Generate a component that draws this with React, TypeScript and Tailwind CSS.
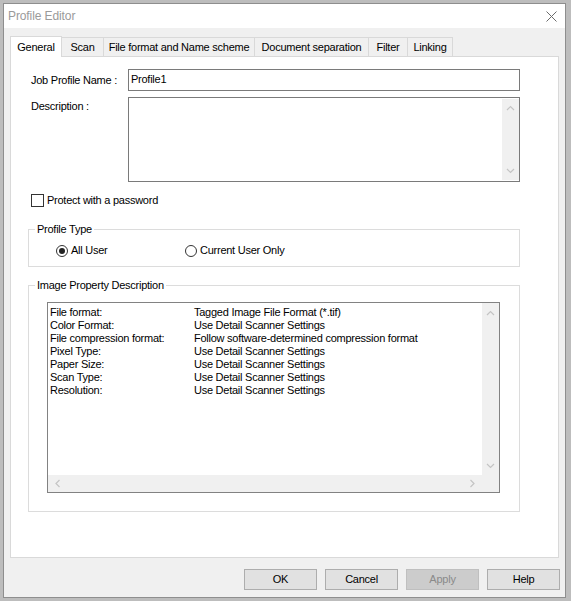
import React from "react";

const TABS: { label: string; w: string }[] = [
  { label: "General", w: "w-[52px]" },
  { label: "Scan", w: "w-[42px]" },
  { label: "File format and Name scheme", w: "w-[151px]" },
  { label: "Document separation", w: "w-[114px]" },
  { label: "Filter", w: "w-[39px]" },
  { label: "Linking", w: "w-[45px]" },
];

const PROPS: [string, string][] = [
  ["File format:", "Tagged Image File Format (*.tif)"],
  ["Color Format:", "Use Detail Scanner Settings"],
  ["File compression format:", "Follow software-determined compression format"],
  ["Pixel Type:", "Use Detail Scanner Settings"],
  ["Paper Size:", "Use Detail Scanner Settings"],
  ["Scan Type:", "Use Detail Scanner Settings"],
  ["Resolution:", "Use Detail Scanner Settings"],
];

type Dir = "up" | "down" | "left" | "right";

const CHEVRONS: Record<Dir, string> = {
  up: "M1 5 L4.5 1.5 L8 5",
  down: "M1 2 L4.5 5.5 L8 2",
  left: "M5.5 1 L2 4.5 L5.5 8",
  right: "M2.5 1 L6 4.5 L2.5 8",
};

function Chevron({ dir }: { dir: Dir }) {
  const flat = dir === "up" || dir === "down";
  return (
    <svg width={flat ? 9 : 8} height={flat ? 7 : 9} viewBox={flat ? "0 0 9 7" : "0 0 8 9"}>
      <path d={CHEVRONS[dir]} fill="none" stroke="#c4c4c4" strokeWidth={1.2} />
    </svg>
  );
}

function Button({ label, disabled }: { label: string; disabled?: boolean }) {
  return (
    <button
      className={`w-[73px] h-[21px] border text-[11px] flex items-center justify-center ${
        disabled ? "bg-[#cccccc] border-[#bfbfbf] text-[#8a8a8a]" : "bg-[#e1e1e1] border-[#adadad] text-black"
      }`}
    >
      {label}
    </button>
  );
}

export default function App() {
  return (
    <div className="w-[571px] h-[601px] bg-[#bdbdbd] pl-[3px] pt-[3px] font-['Liberation_Sans',Arial,sans-serif] text-[11px] leading-[13px] tracking-[-0.25px] text-black">
      <div className="w-[563px] h-[595px] border border-[#8e8e8e] bg-[#f0f0f0] flex flex-col">
        {/* title bar */}
        <div className="h-[24px] bg-white flex items-center justify-between pl-[4px] pr-[8px]">
          <span className="text-[12px] text-[#9a9a9a] tracking-[-0.1px]">Profile Editor</span>
          <svg width="11" height="11" viewBox="0 0 11 11">
            <path d="M0.5 0.5 L10.5 10.5 M10.5 0.5 L0.5 10.5" stroke="#6b6b6b" strokeWidth={1} />
          </svg>
        </div>

        <div className="px-[6px] pt-[8px] flex flex-col">
          {/* tab strip */}
          <div className="flex items-end h-[21px] -mb-[1px] relative z-10">
            {TABS.map((t, i) =>
              i === 0 ? (
                <div
                  key={t.label}
                  className={`${t.w} h-[21px] bg-white border border-b-0 border-[#d9d9d9] flex items-center justify-center`}
                >
                  {t.label}
                </div>
              ) : (
                <div
                  key={t.label}
                  className={`${t.w} h-[19px] mb-[1px] bg-[#f0f0f0] border-t border-r border-[#d9d9d9] flex items-center justify-center`}
                >
                  {t.label}
                </div>
              )
            )}
          </div>

          {/* tab panel */}
          <div className="w-[549px] h-[502px] bg-white border border-[#d9d9d9] flex flex-col">
            <div className="flex items-center mt-[12px] pl-[20px]">
              <span className="w-[97px]">Job Profile Name :</span>
              <div className="w-[392px] h-[22px] border border-[#7a7a7a] pl-[2px] pb-[2px] flex items-center">
                Profile1
              </div>
            </div>

            <div className="flex items-start mt-[6px] pl-[20px]">
              <span className="w-[97px] pt-[3px]">Description :</span>
              <div className="w-[392px] h-[85px] border border-[#7a7a7a] flex justify-end py-[1px]">
                <div className="w-[17px] h-full bg-[#f0f0f0] flex flex-col items-center justify-between py-[6px]">
                  <Chevron dir="up" />
                  <Chevron dir="down" />
                </div>
              </div>
            </div>

            <div className="flex items-center gap-[3px] mt-[12px] pl-[20px]">
              <div className="w-[13px] h-[13px] border border-[#333333] bg-white" />
              <span>Protect with a password</span>
            </div>

            <fieldset className="ml-[17px] mt-[16px] w-[492px] border border-[#dcdcdc] p-0 pb-[9px]">
              <legend className="ml-[6px] px-[2px]">Profile Type</legend>
              <div className="flex items-center h-[13px] mt-[8px] pl-[27px]">
                <div className="w-[129px] flex items-center gap-[3px]">
                  <div className="w-[12px] h-[12px] rounded-full border border-[#333333] flex items-center justify-center">
                    <div className="w-[6px] h-[6px] rounded-full bg-[#222222]" />
                  </div>
                  <span>All User</span>
                </div>
                <div className="flex items-center gap-[3px]">
                  <div className="w-[12px] h-[12px] rounded-full border border-[#333333]" />
                  <span>Current User Only</span>
                </div>
              </div>
            </fieldset>

            <fieldset className="ml-[17px] mt-[12px] w-[492px] border border-[#dcdcdc] p-0 pb-[18px]">
              <legend className="ml-[6px] px-[2px]">Image Property Description</legend>
              <div className="ml-[18px] mt-[10px] w-[453px] h-[191px] border border-[#828282] grid grid-cols-[1fr_17px] grid-rows-[1fr_17px]">
                <div className="pt-[3px] pl-[2px]">
                  {PROPS.map(([k, v]) => (
                    <div key={k} className="flex h-[13px] items-center">
                      <span className="w-[144px]">{k}</span>
                      <span>{v}</span>
                    </div>
                  ))}
                </div>
                <div className="bg-[#f0f0f0] flex flex-col items-center justify-between pt-[7px] pb-[6px]">
                  <Chevron dir="up" />
                  <Chevron dir="down" />
                </div>
                <div className="bg-[#f0f0f0] flex items-center justify-between px-[6px]">
                  <Chevron dir="left" />
                  <Chevron dir="right" />
                </div>
                <div className="bg-[#f0f0f0]" />
              </div>
            </fieldset>
          </div>

          {/* buttons */}
          <div className="flex justify-end gap-[8px] mt-[11px] -mr-[1px]">
            <Button label="OK" />
            <Button label="Cancel" />
            <Button label="Apply" disabled />
            <Button label="Help" />
          </div>
        </div>
      </div>
    </div>
  );
}
